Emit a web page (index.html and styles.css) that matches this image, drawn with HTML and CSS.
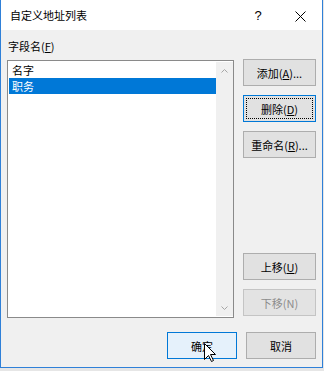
FILE: index.html
```html
<!DOCTYPE html>
<html lang="zh-CN">

<head>
  <meta charset="UTF-8">
  <meta name="viewport" content="width=device-width, initial-scale=1.0" />
  <title>自定义地址列表</title>
  <link rel="stylesheet" href="styles.css">
</head>

<body>

  <div class="dialog">
    <!-- 标题栏 -->
    <div class="titlebar">
      <span class="title">自定义地址列表</span>
      <span class="help">?</span>
      <span class="close">
        <svg width="11" height="11" viewBox="0 0 11 11">
          <path d="M0.5 0.5 L10.5 10.5 M10.5 0.5 L0.5 10.5" stroke="#000" stroke-width="1" fill="none" />
        </svg>
      </span>
    </div>

    <div class="content">
      <div class="field-label">字段名(<u>F</u>)</div>

      <div class="main">
        <div class="listbox">
          <div class="items">
            <div class="item">名字</div>
            <div class="item selected">职务</div>
          </div>
          <div class="scrollbar">
            <span class="arrow">
              <svg width="7" height="4" viewBox="0 0 7 4">
                <path d="M0.5 3.5 L3.5 0.5 L6.5 3.5" stroke="#a6a6a6" fill="none" />
              </svg>
            </span>
            <span class="arrow">
              <svg width="7" height="4" viewBox="0 0 7 4">
                <path d="M0.5 0.5 L3.5 3.5 L6.5 0.5" stroke="#a6a6a6" fill="none" />
              </svg>
            </span>
          </div>
        </div>

        <div class="side">
          <div class="btn-stack">
            <button class="btn">添加(<u>A</u>)...</button>
            <button class="btn default">删除(<u>D</u>)</button>
            <button class="btn">重命名(<u>R</u>)...</button>
          </div>
          <div class="btn-stack">
            <button class="btn">上移(<u>U</u>)</button>
            <button class="btn disabled">下移(N)</button>
          </div>
        </div>
      </div>

      <div class="footer">
        <button class="btn wide hover">确定</button>
        <button class="btn wide">取消</button>
      </div>
    </div>

    <!-- 鼠标指针 -->
    <svg class="cursor" width="13" height="20" viewBox="0 0 13 20">
      <path d="M0.5 0.5 L0.5 16.5 L4.5 12.5 L7.5 18.5 L9.5 17.5 L6.5 11.5 L11.5 11.5 Z" fill="#fff" stroke="#000" stroke-width="1" stroke-linejoin="miter" />
    </svg>
  </div>

</body>

</html>
```

FILE: styles.css
```css
:root {
  --face: #f0f0f0;
  --accent: #0078d7;
  --frame: #2f80d8;
  --btn-bg: #e1e1e1;
  --btn-border: #adadad;
  --font-family: "Noto Sans CJK SC", "Noto Sans", sans-serif;
}

* {
  margin: 0;
  padding: 0;
  box-sizing: border-box;
}

body {
  background: #e6e6e6;
  font-family: var(--font-family);
  font-size: 11px;
  color: #000;
}

u {
  text-decoration: underline;
  text-underline-offset: 1px;
}

.dialog {
  position: relative;
  width: 323px;
  height: 368px;
  background: var(--face);
  border: 1px solid var(--frame);
  border-top: none;
  display: flex;
  flex-direction: column;
}

.titlebar {
  height: 30px;
  background: #fff;
  display: flex;
  align-items: center;
}

.title {
  padding-left: 9px;
  flex: 1;
}

.help {
  width: 40px;
  text-align: center;
  font-family: "Liberation Sans", sans-serif;
  font-size: 13px;
  padding-top: 1px;
}

.close {
  width: 44px;
  height: 30px;
  display: flex;
  align-items: center;
  justify-content: center;
  padding-top: 2px;
}

.content {
  padding: 8px 6px 8px 6px;
  display: flex;
  flex-direction: column;
}

.field-label {
  height: 16px;
  line-height: 16px;
  padding-left: 1px;
}

.main {
  margin-top: 5px;
  height: 259px;
  display: flex;
  gap: 9px;
}

.listbox {
  margin-top: 1px;
  width: 227px;
  background: #fff;
  border: 1px solid #8a8a8a;
  padding: 1px 0 1px 1px;
  display: flex;
}

.items {
  flex: 1;
}

.item {
  height: 16px;
  line-height: 16px;
  padding-left: 3px;
}

.item.selected {
  background: var(--accent);
  color: #fff;
}

.scrollbar {
  width: 17px;
  background: var(--face);
  display: flex;
  flex-direction: column;
  justify-content: space-between;
}

.arrow {
  height: 17px;
  display: flex;
  align-items: center;
  justify-content: center;
}

.side {
  width: 73px;
  padding-bottom: 2px;
  display: flex;
  flex-direction: column;
  justify-content: space-between;
}

.btn-stack {
  display: flex;
  flex-direction: column;
  gap: 9px;
}

.btn {
  position: relative;
  height: 27px;
  background: var(--btn-bg);
  border: 1px solid var(--btn-border);
  font-family: var(--font-family);
  font-size: 11px;
  color: #000;
}

.btn.default {
  border-color: var(--accent);
}

.btn.default::after {
  content: "";
  position: absolute;
  inset: 2px;
  border: 1px dotted #000;
}

.btn.disabled {
  background: #e3e3e3;
  border-color: #c4c4c4;
  color: #8c8c8c;
}

.btn.hover {
  background: #e5f1fb;
  border-color: var(--accent);
}

.footer {
  margin-top: 14px;
  display: flex;
  justify-content: flex-end;
  gap: 9px;
}

.btn.wide {
  width: 70px;
}

.cursor {
  position: absolute;
  left: 203px;
  top: 343px;
}
```
